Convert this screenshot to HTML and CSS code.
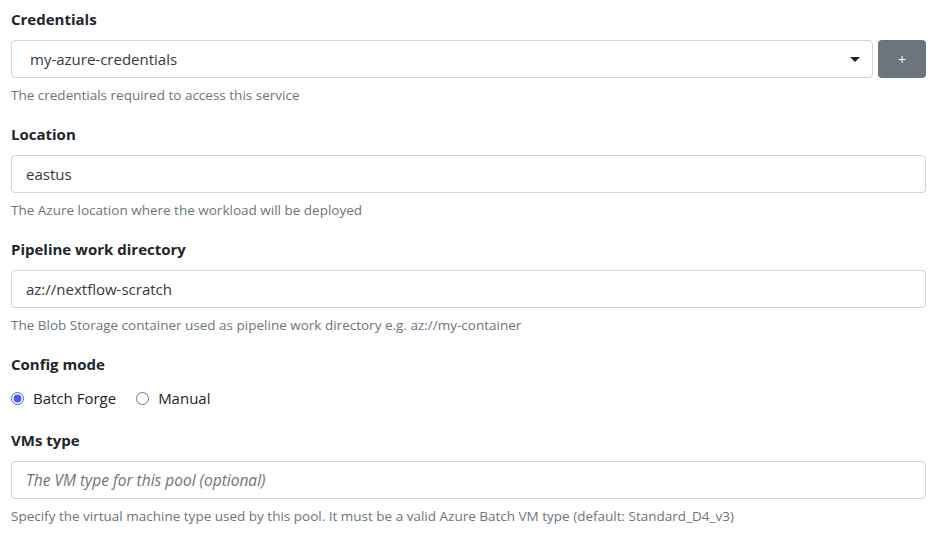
FILE: index.html
```html
<!DOCTYPE html>
<html lang="en">
<head>
    <meta charset="UTF-8">
    <meta name="viewport" content="width=device-width, initial-scale=1.0">
    <title>Azure Batch compute environment</title>
    <link rel="stylesheet" href="styles.css">
</head>
<body>
    <form class="ce-form">
        <!-- Credentials -->
        <div class="field">
            <label class="field-label">Credentials</label>
            <div class="select-row">
                <div class="select-box">
                    <span>my-azure-credentials</span>
                    <span class="caret"></span>
                </div>
                <button type="button" class="btn-add">+</button>
            </div>
            <div class="help">The credentials required to access this service</div>
        </div>

        <!-- Location -->
        <div class="field">
            <label class="field-label" for="location">Location</label>
            <input type="text" id="location" class="text-input" value="eastus">
            <div class="help">The Azure location where the workload will be deployed</div>
        </div>

        <!-- Work dir -->
        <div class="field">
            <label class="field-label" for="workdir">Pipeline work directory</label>
            <input type="text" id="workdir" class="text-input" value="az://nextflow-scratch">
            <div class="help">The Blob Storage container used as pipeline work directory e.g. az://my-container</div>
        </div>

        <!-- Config mode -->
        <div class="field field-radio">
            <label class="field-label">Config mode</label>
            <div class="radio-row">
                <label class="radio"><input type="radio" name="mode" checked> Batch Forge</label>
                <label class="radio"><input type="radio" name="mode"> Manual</label>
            </div>
        </div>

        <!-- VMs type -->
        <div class="field">
            <label class="field-label" for="vmtype">VMs type</label>
            <input type="text" id="vmtype" class="text-input" placeholder="The VM type for this pool (optional)">
            <div class="help">Specify the virtual machine type used by this pool. It must be a valid Azure Batch VM type (default: Standard_D4_v3)</div>
        </div>
    </form>
</body>
</html>
```

FILE: styles.css
```css
body {
    margin: 0;
    padding: 7px 20px 0 11px;
    font-family: 'Segoe UI', 'Open Sans', sans-serif;
    color: #212529;
    background: #ffffff;
}

.field {
    margin-bottom: 17px;
}

.field-label {
    display: block;
    font-size: 15px;
    font-weight: bold;
    line-height: 24px;
    margin-bottom: 9px;
}

/* Inputs */
.text-input,
.select-box {
    box-sizing: border-box;
    width: 100%;
    height: 38px;
    padding: 0 14px;
    border: 1px solid #ced4da;
    border-radius: 4px;
    font-family: inherit;
    font-size: 15px;
    color: #343a40;
    background: #fff;
    display: block;
}

.text-input::placeholder {
    color: #6c757d;
    font-style: italic;
    font-size: 15.5px;
}

.select-row {
    display: flex;
    gap: 5px;
}

.select-box {
    flex: 1;
    display: flex;
    align-items: center;
    justify-content: space-between;
    padding: 0 12px 0 18px;
}

.caret {
    width: 0;
    height: 0;
    border-left: 5px solid transparent;
    border-right: 5px solid transparent;
    border-top: 5px solid #222;
}

.btn-add {
    width: 48px;
    height: 38px;
    border: none;
    border-radius: 4px;
    background: #6c757d;
    color: #fff;
    font-size: 14px;
    font-family: inherit;
}

.help {
    margin-top: 7px;
    font-size: 13.5px;
    line-height: 20px;
    color: #6c757d;
}

/* Radios */
.field-radio .field-label {
    margin-bottom: 10px;
}

.field-radio {
    margin-bottom: 18px;
}

.radio-row {
    display: flex;
    gap: 20px;
    height: 24px;
    align-items: center;
    font-size: 15px;
}

.radio {
    display: flex;
    align-items: center;
    gap: 9px;
}

.radio input {
    margin: 0;
    width: 13px;
    height: 13px;
    accent-color: #4a5cf0;
}
```
